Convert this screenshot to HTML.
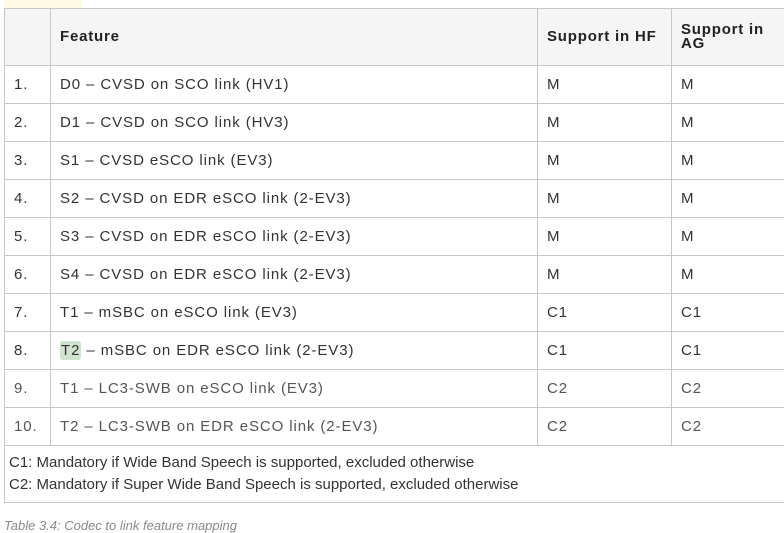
<!DOCTYPE html>
<html><head><style>
body{margin:0;background:#fff;width:784px;height:526px;overflow:hidden;font-family:"Liberation Sans",Arial,sans-serif;position:relative}
.hl{position:absolute;left:4px;top:0;width:78px;height:9px;background:#fdfbe6}
table{position:absolute;left:4px;top:8px;border-collapse:collapse;width:800px;font-size:15px;letter-spacing:0.9px;color:#333}
td,th{border:1px solid #c8c8c8;padding:0 0 0 9px;text-align:left;height:37px}
th{background:#f5f5f5;font-weight:bold;color:#222;height:56px;line-height:14px;letter-spacing:0.8px}
.l td{color:#555}
.ft td{height:56px;font-size:15px;letter-spacing:0;line-height:22px;padding-left:4px;color:#333}
.t2{background:#cfe3cf;border-radius:3px;padding:1px 1px}
.cap{position:absolute;left:4px;top:518px;font-size:13px;font-style:italic;color:#888}
</style></head><body>
<div class="hl"></div>
<table>
<colgroup><col style="width:46px"><col style="width:487px"><col style="width:134px"><col></colgroup>
<tr><th></th><th>Feature</th><th>Support in HF</th><th>Support in<br>AG</th></tr>
<tr><td>1.</td><td>D0 – CVSD on SCO link (HV1)</td><td>M</td><td>M</td></tr>
<tr><td>2.</td><td>D1 – CVSD on SCO link (HV3)</td><td>M</td><td>M</td></tr>
<tr><td>3.</td><td>S1 – CVSD eSCO link (EV3)</td><td>M</td><td>M</td></tr>
<tr><td>4.</td><td>S2 – CVSD on EDR eSCO link (2-EV3)</td><td>M</td><td>M</td></tr>
<tr><td>5.</td><td>S3 – CVSD on EDR eSCO link (2-EV3)</td><td>M</td><td>M</td></tr>
<tr><td>6.</td><td>S4 – CVSD on EDR eSCO link (2-EV3)</td><td>M</td><td>M</td></tr>
<tr><td>7.</td><td>T1 – mSBC on eSCO link (EV3)</td><td>C1</td><td>C1</td></tr>
<tr><td>8.</td><td><span class="t2">T2</span> – mSBC on EDR eSCO link (2-EV3)</td><td>C1</td><td>C1</td></tr>
<tr class="l"><td>9.</td><td>T1 – LC3-SWB on eSCO link (EV3)</td><td>C2</td><td>C2</td></tr>
<tr class="l"><td>10.</td><td>T2 – LC3-SWB on EDR eSCO link (2-EV3)</td><td>C2</td><td>C2</td></tr>
<tr class="ft"><td colspan="4">C1: Mandatory if Wide Band Speech is supported, excluded otherwise<br>C2: Mandatory if Super Wide Band Speech is supported, excluded otherwise</td></tr>
</table>
<div class="cap">Table 3.4: Codec to link feature mapping</div>
</body></html>
